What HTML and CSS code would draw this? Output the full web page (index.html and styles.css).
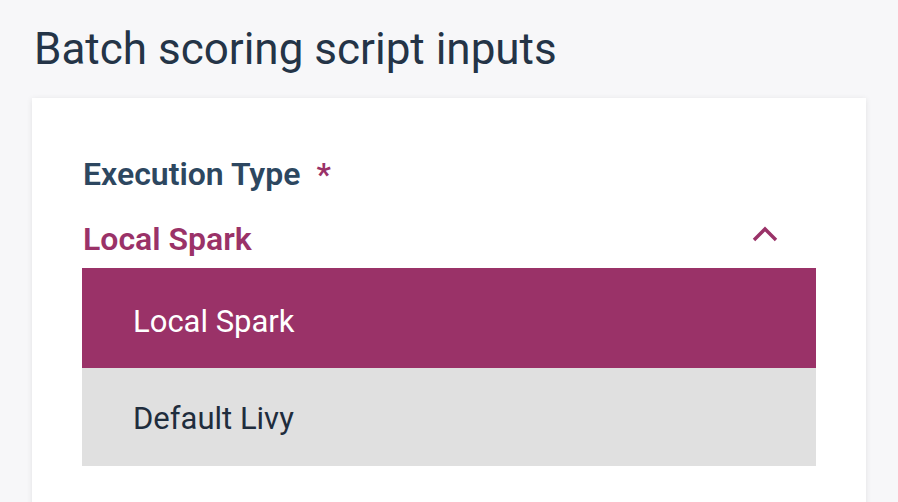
FILE: index.html
```html
<!DOCTYPE html>
<html>
<head>
<meta charset="utf-8">
<link rel="stylesheet" href="styles.css">
</head>
<body>
<div class="page">
  <h1 class="title">Batch scoring script inputs</h1>
  <div class="card">
    <div class="field-label">Execution Type <span class="req">*</span></div>
    <div class="select">
      <span class="select-value">Local Spark</span>
      <svg class="chevron" width="26" height="16" viewBox="0 0 26 16"><path d="M2 14 L13 3 L24 14" fill="none" stroke="#9a3268" stroke-width="3.4"/></svg>
    </div>
    <ul class="menu">
      <li class="option option-active">Local Spark</li>
      <li class="option">Default Livy</li>
    </ul>
  </div>
</div>
</body>
</html>
```

FILE: styles.css
```css
html, body {
  margin: 0;
  padding: 0;
  background: #f7f7f9;
  height: 100%;
  overflow: hidden;
}
.page {
  font-family: Roboto, "Noto Sans", sans-serif;
  padding: 24px 32px 0 32px;
}
.title {
  margin: 0 0 0 2px;
  font-size: 44px;
  font-weight: 400;
  line-height: 50px;
  color: #243447;
  height: 74px;
}
.card {
  width: 834px;
  height: 420px;
  background: #ffffff;
  box-shadow: 0 1px 6px rgba(0,0,0,0.09);
  padding: 56px 50px 0 50px;
  box-sizing: border-box;
}
.field-label {
  font-size: 32px;
  font-weight: 600;
  color: #2d4760;
  line-height: 40px;
  padding-left: 1px;
}
.req {
  color: #9a3268;
  margin-left: 8px;
}
.select {
  display: flex;
  align-items: flex-start;
  justify-content: space-between;
  height: 74px;
  box-sizing: border-box;
  padding: 25px 38px 0 1px;
}
.select-value {
  font-size: 32px;
  font-weight: 600;
  line-height: 40px;
  color: #9a3268;
}
.chevron {
  display: block;
  margin-top: 7px;
}
.menu {
  list-style: none;
  margin: 0;
  padding: 0;
  width: 734px;
}
.option {
  height: 98px;
  box-sizing: border-box;
  display: flex;
  align-items: center;
  padding-left: 51px;
  padding-top: 2px;
  font-size: 31px;
  color: #1f2d3d;
  background: #e0e0e0;
}
.option-active {
  height: 100px;
  padding-top: 6px;
  background: #9a3268;
  color: #ffffff;
}
```
